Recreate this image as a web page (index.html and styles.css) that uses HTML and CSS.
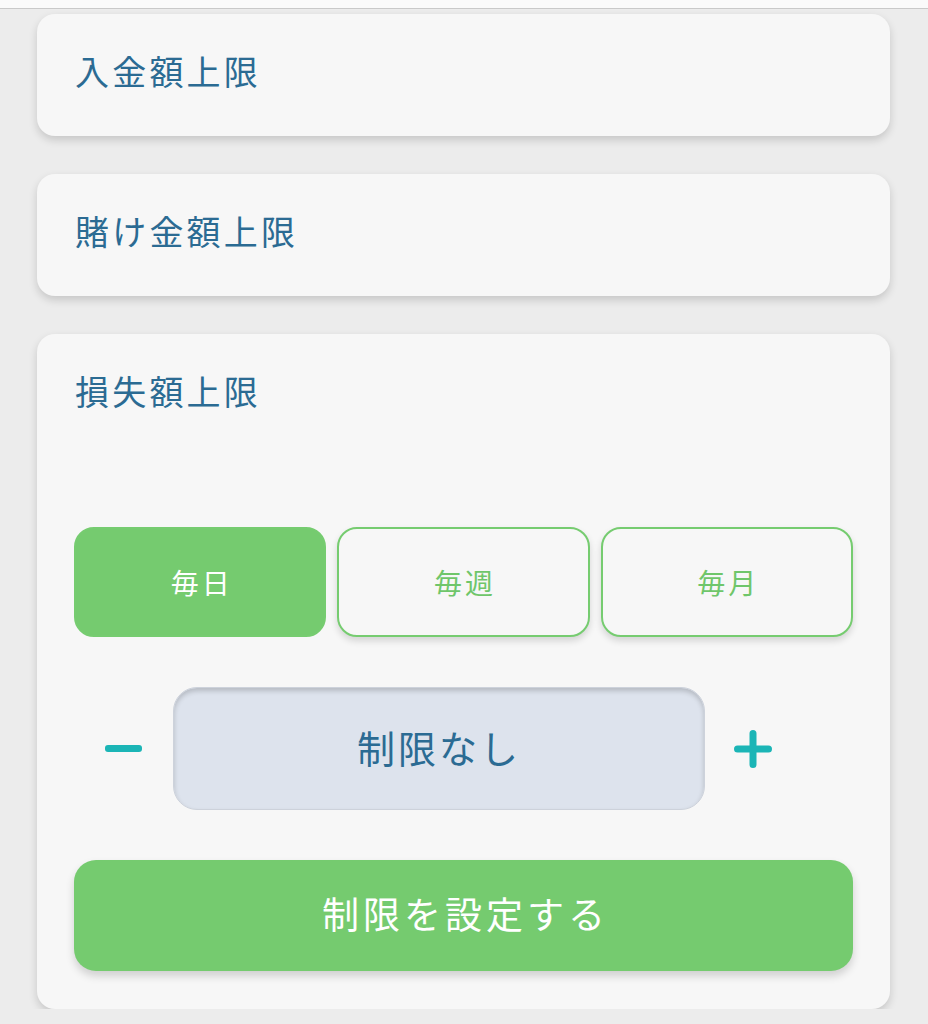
FILE: index.html
```html
<!DOCTYPE html>
<html lang="ja">
<head>
<meta charset="utf-8">
<title>制限</title>
<link rel="stylesheet" href="styles.css">
</head>
<body>
<div class="topbar"></div>
<main class="list">
  <section class="card">
    <div class="card-head">入金額上限</div>
  </section>
  <section class="card">
    <div class="card-head">賭け金額上限</div>
  </section>
  <section class="card card-open">
    <div class="card-head">損失額上限</div>
    <div class="periods">
      <button class="period period-active">毎日</button>
      <button class="period">毎週</button>
      <button class="period">毎月</button>
    </div>
    <div class="stepper">
      <div class="step step-minus"><span class="minus-bar"></span></div>
      <div class="amount">制限なし</div>
      <div class="step step-plus">
        <svg width="38" height="38" viewBox="0 0 38 38"><path d="M19 3.5V34.5M3.5 19H34.5" stroke="#1bb5b6" stroke-width="7" stroke-linecap="round" fill="none"/></svg>
      </div>
    </div>
    <button class="submit">制限を設定する</button>
  </section>
</main>
</body>
</html>
```
FILE: styles.css
```css
html, body {
  margin: 0;
  padding: 0;
  background: #ececec;
  font-family: "Noto Sans CJK JP", "Noto Sans", sans-serif;
}
.topbar {
  height: 8px;
  background: #fafafa;
  border-bottom: 1px solid #c9c9c9;
}
.list {
  display: flex;
  flex-direction: column;
  gap: 38px;
  padding: 5px 38px 0 37px;
}
.card {
  background: #f7f7f7;
  border-radius: 18px;
  box-shadow: 0 4px 8px rgba(0, 0, 0, 0.16);
}
.card-head {
  height: 122px;
  box-sizing: border-box;
  display: flex;
  align-items: center;
  padding: 0 38px 9px;
  color: #2b6b93;
  font-size: 34px;
  letter-spacing: 3.2px;
}
.card-open {
  padding: 0 37px 38px;
}
.card-open .card-head {
  padding: 0 1px 9px;
}
.periods {
  margin-top: 71px;
  display: grid;
  grid-template-columns: repeat(3, 1fr);
  gap: 11px;
}
.period {
  height: 110px;
  border-radius: 20px;
  border: 2px solid #76cc70;
  background: #f7f7f7;
  color: #6fc66a;
  font-family: inherit;
  font-size: 28px;
  letter-spacing: 3px;
  box-shadow: 0 4px 7px rgba(0, 0, 0, 0.14);
  padding: 0 0 0 3px;
}
.period-active {
  background: #75cb6f;
  color: #ffffff;
  box-shadow: none;
}
.stepper {
  margin-top: 50px;
  display: flex;
  align-items: center;
  height: 123px;
}
.step {
  display: flex;
  align-items: center;
  justify-content: center;
}
.step-minus {
  width: 99px;
}
.step-plus {
  width: 96px;
}
.minus-bar {
  width: 37px;
  height: 7px;
  border-radius: 3px;
  background: #1bb5b6;
}
.amount {
  width: 532px;
  height: 123px;
  box-sizing: border-box;
  border-radius: 24px;
  background: #dde3ed;
  border: 1px solid #cdd2db;
  box-shadow: inset 0 3px 5px rgba(0, 0, 0, 0.18);
  display: flex;
  align-items: center;
  justify-content: center;
  padding-bottom: 4px;
  color: #2b6b93;
  font-size: 38px;
  letter-spacing: 3px;
}
.submit {
  margin-top: 50px;
  width: 100%;
  height: 111px;
  border: none;
  border-radius: 22px;
  background: #75cb6f;
  color: #ffffff;
  font-family: inherit;
  font-size: 37px;
  letter-spacing: 4px;
  box-shadow: 0 5px 9px rgba(0, 0, 0, 0.16);
  padding: 0 0 6px 4px;
  display: block;
}
```
